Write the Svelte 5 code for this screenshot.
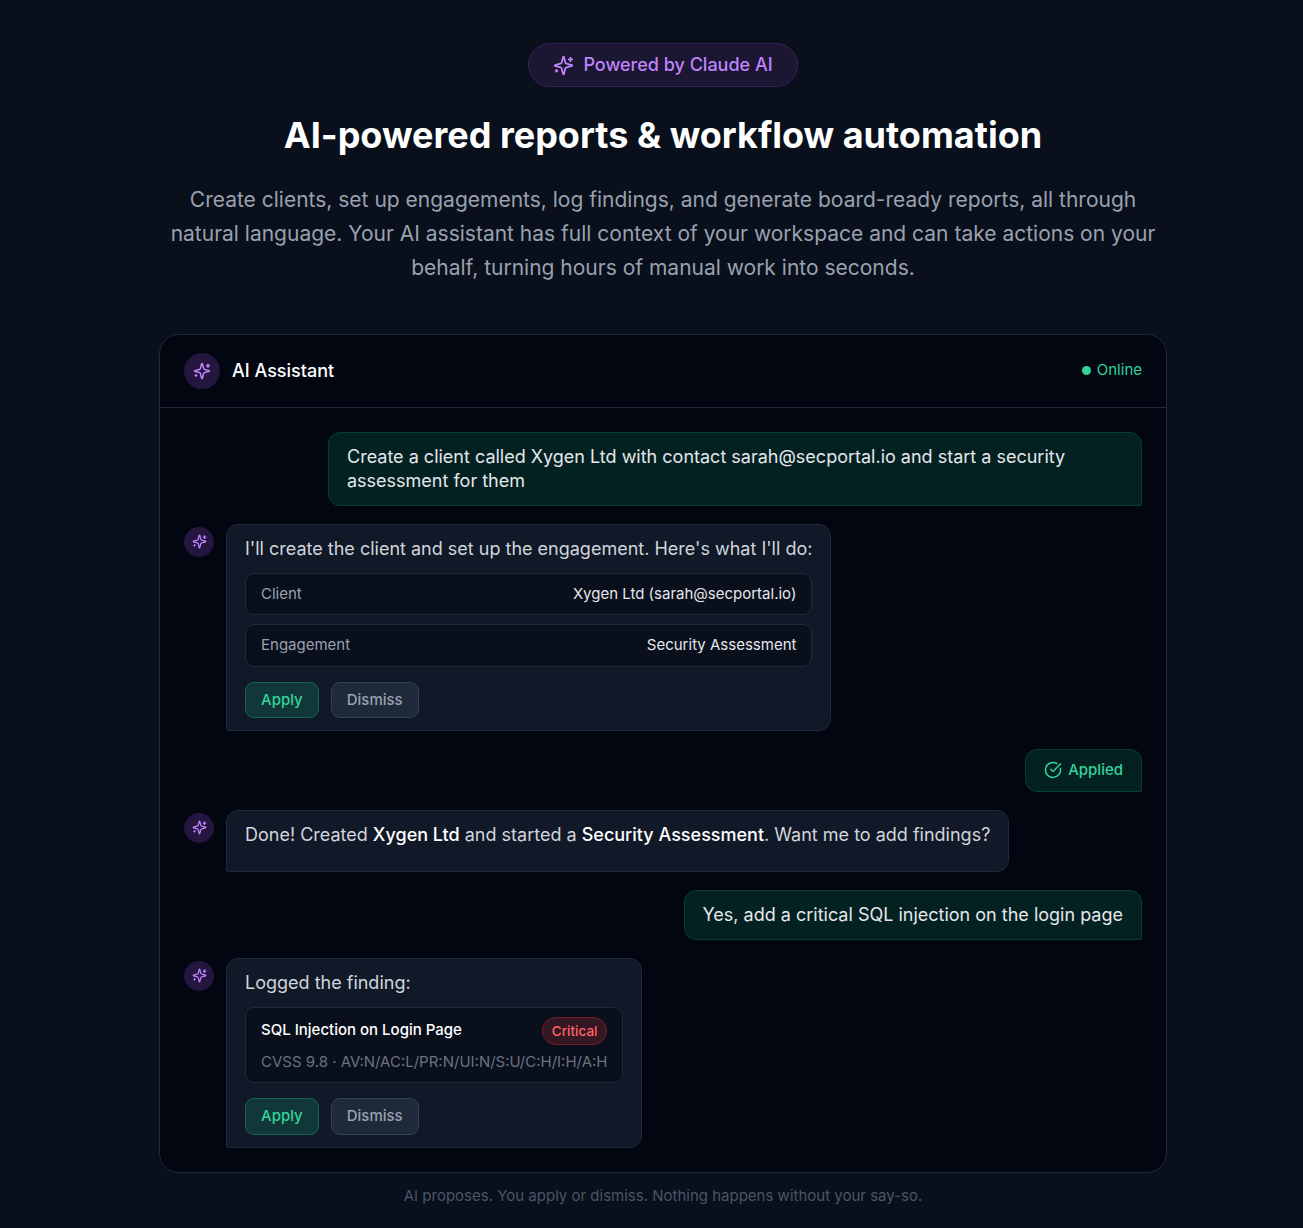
<script>
  const proposal = [
    { label: 'Client', value: 'Xygen Ltd (sarah@secportal.io)' },
    { label: 'Engagement', value: 'Security Assessment' },
  ];
</script>

{#snippet sparkles(size)}
  <svg class="sparkles {size}" viewBox="0 0 24 24" aria-hidden="true">
    <path d="M9.937 15.5A2 2 0 0 0 8.5 14.063l-6.135-1.582a.5.5 0 0 1 0-.962L8.5 9.936A2 2 0 0 0 9.937 8.5l1.582-6.135a.5.5 0 0 1 .963 0L14.063 8.5A2 2 0 0 0 15.5 9.937l6.135 1.581a.5.5 0 0 1 0 .964L15.5 14.063a2 2 0 0 0-1.437 1.437l-1.582 6.135a.5.5 0 0 1-.963 0z" />
    <path d="M20 3v4M22 5h-4M4 17v2M5 18H3" />
  </svg>
{/snippet}

{#snippet avatar()}
  <div class="avatar">{@render sparkles('sm')}</div>
{/snippet}

{#snippet actions()}
  <div class="actions">
    <button class="btn apply">Apply</button>
    <button class="btn dismiss">Dismiss</button>
  </div>
{/snippet}

<main class="page">
  <div class="pill">{@render sparkles('lg')}<span>Powered by Claude AI</span></div>
  <h1>AI-powered reports &amp; workflow automation</h1>
  <p class="lead">
    Create clients, set up engagements, log findings, and generate board-ready reports, all through natural language. Your AI assistant has full context of your workspace and can take actions on your behalf, turning hours of manual work into seconds.
  </p>

  <section class="panel">
    <header>
      <div class="logo">{@render sparkles('md')}</div>
      <h2>AI Assistant</h2>
      <div class="online"><i></i><span>Online</span></div>
    </header>

    <div class="chat">
      <div class="bubble user first">
        Create a client called Xygen Ltd with contact sarah@secportal.io and start a security assessment for them
      </div>

      <div class="row">
        {@render avatar()}
        <div class="bubble bot">
          <p>I'll create the client and set up the engagement. Here's what I'll do:</p>
          <div class="fields">
            {#each proposal as item}
              <div class="field"><span>{item.label}</span><b>{item.value}</b></div>
            {/each}
          </div>
          {@render actions()}
        </div>
      </div>

      <div class="bubble user applied">
        <svg viewBox="0 0 24 24" aria-hidden="true">
          <path d="M21.801 10A10 10 0 1 1 17 3.335" />
          <path d="m9 11 3 3L22 4" />
        </svg>
        <span>Applied</span>
      </div>

      <div class="row">
        {@render avatar()}
        <div class="bubble bot">
          <p>Done! Created <strong>Xygen Ltd</strong> and started a <strong>Security Assessment</strong>. Want me to add findings?</p>
        </div>
      </div>

      <div class="bubble user">Yes, add a critical SQL injection on the login page</div>

      <div class="row">
        {@render avatar()}
        <div class="bubble bot">
          <p>Logged the finding:</p>
          <div class="finding">
            <div class="finding-head"><b>SQL Injection on Login Page</b><span class="tag">Critical</span></div>
            <div class="cvss">CVSS 9.8 · AV:N/AC:L/PR:N/UI:N/S:U/C:H/I:H/A:H</div>
          </div>
          {@render actions()}
        </div>
      </div>
    </div>
  </section>

  <p class="note">AI proposes. You apply or dismiss. Nothing happens without your say-so.</p>
</main>

<style>
  :global(body) {
    background: #090f1b;
    overflow: hidden;
  }
  .page {
    box-sizing: border-box;
    width: 1303px;
    height: 1228px;
    padding: 43px 136px 0 159px;
    display: flex;
    flex-direction: column;
    align-items: center;
    font-family: Inter, sans-serif;
    color: #fff;
  }
  .page :is(h1, h2, p) {
    margin: 0;
  }
  .page :is(h1, h2, p, div, button, span, header, section) {
    box-sizing: border-box;
  }
  svg {
    display: block;
    flex: none;
    fill: none;
    stroke: currentColor;
    stroke-width: 2;
    stroke-linecap: round;
    stroke-linejoin: round;
  }
  .lg { width: 21px; height: 21px; }
  .md { width: 18px; height: 18px; }
  .sm { width: 15px; height: 15px; }
  .pill {
    height: 44px;
    width: 270px;
    display: flex;
    align-items: center;
    justify-content: center;
    gap: 9px;
    border: 1px solid #38215a;
    border-radius: 22px;
    background: #1b1631;
    color: #c084fc;
    font-size: 18px;
    font-weight: 500;
    white-space: nowrap;
  }
  .pill span { padding-bottom: 2px; }
  h1 {
    margin-top: 24px !important;
    font-size: 36px;
    line-height: 48px;
    font-weight: 700;
    white-space: nowrap;
  }
  .lead {
    width: 1008px;
    margin-top: 24px !important;
    font-size: 21px;
    line-height: 34px;
    text-align: center;
    color: #99a1af;
  }
  .panel {
    width: 1008px;
    height: 839px;
    flex: none;
    margin-top: 49px;
    border: 1px solid #1e2939;
    border-radius: 20px;
    background: #020611;
    overflow: hidden;
  }
  header {
    height: 73px;
    padding: 0 24px;
    display: flex;
    align-items: center;
    border-bottom: 1px solid #1e2939;
  }
  .logo, .avatar {
    display: grid;
    place-items: center;
    flex: none;
    border-radius: 50%;
    background: #24163f;
    color: #c084fc;
  }
  .logo { width: 36px; height: 36px; }
  .avatar { width: 30px; height: 30px; margin-top: 3px; padding-bottom: 1px; }
  h2 {
    margin-left: 12px !important;
    padding-bottom: 2px;
    font-size: 18px;
    font-weight: 500;
  }
  .online {
    display: flex;
    align-items: center;
    gap: 6px;
    margin-left: auto;
    padding-bottom: 2px;
    font-size: 15px;
    color: #34d399;
  }
  .online span { padding-bottom: 2px; }
  .online i {
    width: 9px;
    height: 9px;
    border-radius: 50%;
    background: #34d399;
  }
  .chat {
    padding: 24px;
    display: flex;
    flex-direction: column;
    gap: 18px;
  }
  .row {
    display: flex;
    align-items: flex-start;
    gap: 12px;
  }
  .bubble {
    border: 1px solid;
    padding: 12px 18px;
    font-size: 18px;
    line-height: 24px;
  }
  .user {
    align-self: flex-end;
    border-color: #063d36;
    border-radius: 12px 12px 2px 12px;
    background: #042122;
    color: #e5e7eb;
  }
  .first { width: 814px; }
  .bot {
    border-color: #1e2939;
    border-radius: 12px 12px 12px 2px;
    background: #111827;
    color: #d1d5dc;
  }
  .bot p { margin-bottom: 12px; }
  .bot strong { font-weight: 500; color: #fff; }
  .fields { display: flex; flex-direction: column; gap: 9px; }
  .field {
    height: 42.4px;
    display: flex;
    justify-content: space-between;
    align-items: center;
    padding: 0 15px 0.6px;
    border: 1px solid #1e2939;
    border-radius: 9px;
    background: #090f1b;
    font-size: 15px;
  }
  .field span { color: #99a1af; }
  .field b { font-weight: 400; color: #e5e7eb; }
  .actions { display: flex; gap: 12px; margin-top: 15px; }
  .btn {
    height: 36.4px;
    padding: 6px 15px 6.4px;
    border: 1px solid;
    border-radius: 9px;
    font: 500 15px/22px Inter, sans-serif;
  }
  .apply { border-color: #15654f; background: #113738; color: #34d399; }
  .dismiss { border-color: #364153; background: #1e2939; color: #99a1af; }
  .applied {
    height: 42.9px;
    padding-bottom: 12.8px;
    display: flex;
    align-items: center;
    gap: 6px;
    font-size: 15px;
    font-weight: 500;
    color: #34d399;
  }
  .applied svg { width: 18px; height: 18px; }
  .finding {
    height: 76.1px;
    padding: 9px 15px;
    border: 1px solid #1e2939;
    border-radius: 9px;
    background: #090f1b;
    font-size: 15px;
    line-height: 22px;
  }
  .finding-head { display: flex; justify-content: space-between; }
  .finding-head b { line-height: 26px; font-weight: 500; color: #fff; }
  .tag {
    height: 28px;
    padding: 0 9px;
    border: 1px solid #751e29;
    border-radius: 14px;
    background: #331722;
    color: #ff6467;
    font-size: 13.5px;
    font-weight: 500;
    line-height: 26px;
  }
  .cvss { margin-top: 6px; color: #6a7282; }
  .note {
    margin-top: 12px !important;
    font-size: 15px;
    line-height: 22px;
    color: #4a5565;
  }
</style>
